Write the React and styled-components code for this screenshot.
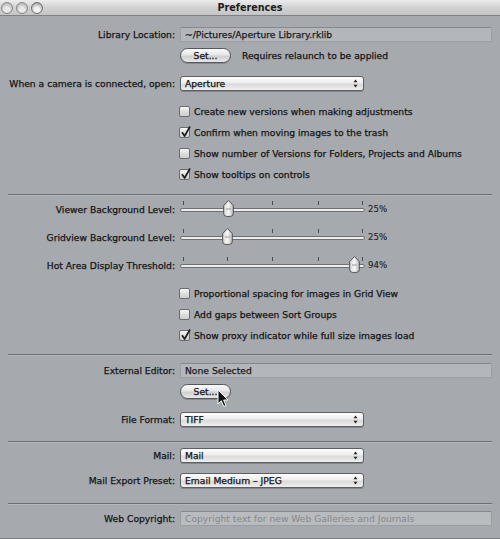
import React from "react";
import styled, { createGlobalStyle } from "styled-components";

const Global = createGlobalStyle`
  html, body { margin: 0; padding: 0; background: #a6a9ad; }
  #root { width: 500px; height: 539px; }
`;

const Window = styled.div`
  position: relative;
  width: 500px;
  height: 538px;
  border-bottom: 1px solid #7b7e82;
  background: #a6a9ad;
  overflow: hidden;
  font-family: "DejaVu Sans", "Liberation Sans", sans-serif;
  font-size: 9.2px;
  color: #141516;
  -webkit-text-stroke: 0.25px currentColor;
  display: flex;
  flex-direction: column;
`;

const TitleBar = styled.div`
  height: 15px;
  flex: none;
  display: grid;
  grid-template-columns: 1fr auto 1fr;
  align-items: center;
  background: linear-gradient(#ececec, #d2d2d2 50%, #c4c4c4);
  border-bottom: 1px solid #7f8184;
`;

const Lights = styled.div`
  display: flex;
  gap: 3px;
  padding-left: 1px;
`;

const Light = styled.div`
  width: 12px;
  height: 12px;
  border-radius: 50%;
  box-sizing: border-box;
  border: 1px solid #6f6f6f;
  background: radial-gradient(circle at 50% 70%, #f2f2f2 0 30%, #b8b8b8 70%, #8c8c8c);
  opacity: ${(p) => (p.$dim ? 0.75 : 1)};
`;

const Title = styled.div`
  font-weight: bold;
  font-size: 9.6px;
  color: #1c1c1c;
  -webkit-text-stroke: 0;
`;

const Content = styled.div`
  display: flex;
  flex-direction: column;
`;

const Row = styled.div`
  display: grid;
  grid-template-columns: 175px 1fr;
  column-gap: 5px;
  align-items: center;
  height: ${(p) => p.$h}px;
  margin-top: ${(p) => p.$mt}px;
`;

const Label = styled.div`
  text-align: right;
  white-space: nowrap;
`;

const Cell = styled.div`
  display: flex;
  align-items: center;
  height: 100%;
`;

const Field = styled.div`
  box-sizing: border-box;
  width: 312px;
  height: 15px;
  padding-left: 4px;
  display: flex;
  align-items: center;
  background: ${(p) => (p.$placeholder ? "#b9bcbf" : "#b3b6ba")};
  border: 1px solid #9a9da1;
  border-top-color: #85888c;
  border-radius: 2px;
  color: ${(p) => (p.$placeholder ? "#85888c" : "#1a1b1c")};
  -webkit-text-stroke: ${(p) => (p.$placeholder ? "0" : "0.25px currentColor")};
  white-space: nowrap;
`;

const PushButton = styled.div`
  box-sizing: border-box;
  width: 51px;
  height: 15px;
  border-radius: 8px;
  border: 1px solid #56585b;
  background: linear-gradient(#fbfbfb, #e6e6e6 45%, #cfcfcf 55%, #e8e8e8);
  box-shadow: 0 1px 0 rgba(0, 0, 0, 0.18);
  display: flex;
  align-items: center;
  justify-content: center;
  color: #111;
`;

const Note = styled.span`
  margin-left: 11px;
`;

const Popup = styled.div`
  box-sizing: border-box;
  width: 184px;
  height: 15px;
  border-radius: 3px;
  border: 1px solid #5d6063;
  background: linear-gradient(#fdfdfd, #eeeeee 45%, #dadada 55%, #efefef);
  box-shadow: 0 1px 0 rgba(0, 0, 0, 0.2);
  display: flex;
  align-items: center;
  justify-content: space-between;
  padding: 0 5px 0 4px;
  color: #111;
  white-space: nowrap;
`;

const Separator = styled.div`
  height: 1px;
  margin: ${(p) => p.$mt}px 8px 0 8px;
  background: #6b6e72;
  box-shadow: 0 1px 0 rgba(255, 255, 255, 0.18);
`;

const CheckRow = styled.div`
  display: flex;
  align-items: center;
  gap: 4px;
  height: 21px;
  padding-left: 179px;
  margin-top: ${(p) => p.$mt || 0}px;
  white-space: nowrap;
`;

const Box = styled.div`
  position: relative;
  box-sizing: border-box;
  width: 11px;
  height: 11px;
  border: 1px solid #6a6c6f;
  border-radius: 2px;
  background: linear-gradient(#f7f7f7, #dcdcdc 55%, #cfcfcf);
  flex: none;
`;

const CheckMark = styled.svg`
  position: absolute;
  left: 0px;
  top: -3px;
`;

const SliderWrap = styled.div`
  position: relative;
  width: 185px;
  height: 20px;
  flex: none;
`;

const Track = styled.div`
  position: absolute;
  left: 0;
  right: 0;
  top: 9px;
  height: 2px;
  background: #ececec;
  border: 1px solid #6e7074;
  border-radius: 2px;
`;

const Tick = styled.div`
  position: absolute;
  top: 2px;
  width: 1px;
  height: 4px;
  background: #4a4c4f;
`;

const Thumb = styled.svg`
  position: absolute;
  top: 1px;
`;

const Percent = styled.span`
  margin-left: 3px;
  font-size: 8.6px;
  color: #222;
  -webkit-text-stroke: 0.1px currentColor;
`;

const Cursor = styled.svg`
  position: absolute;
  left: 217px;
  top: 389px;
`;

function Arrows() {
  return (
    <svg width="5" height="9" viewBox="0 0 5 9">
      <path d="M2.5 0.5 L4.5 3.2 H0.5 Z" fill="#222" />
      <path d="M2.5 8.5 L4.5 5.8 H0.5 Z" fill="#222" />
    </svg>
  );
}

function Check({ checked, children, mt }) {
  return (
    <CheckRow $mt={mt}>
      <Box>
        {checked && (
          <CheckMark width="12" height="13" viewBox="0 0 12 13">
            <path d="M2 7.2 L4.6 11 L10 1.5" fill="none" stroke="#1d1e20" strokeWidth="1.7" strokeLinejoin="round" />
          </CheckMark>
        )}
      </Box>
      <span>{children}</span>
    </CheckRow>
  );
}

const TICKS = [3, 47, 92, 138, 182];

function Slider({ thumb, value }) {
  return (
    <Cell>
      <SliderWrap>
        {TICKS.map((t) => (
          <Tick key={t} style={{ left: t }} />
        ))}
        <Track />
        <Thumb width="11" height="17" viewBox="0 0 11 17" style={{ left: thumb - 5.5 }}>
          <defs>
            <linearGradient id={"tg" + thumb} x1="0" x2="1" y1="0" y2="0">
              <stop offset="0" stopColor="#d6d6d6" />
              <stop offset="0.5" stopColor="#f6f6f6" />
              <stop offset="1" stopColor="#b9b9b9" />
            </linearGradient>
          </defs>
          <path
            d="M5.5 0.6 L10.3 5.5 V13.5 Q10.3 16.4 7.4 16.4 H3.6 Q0.7 16.4 0.7 13.5 V5.5 Z"
            fill={"url(#tg" + thumb + ")"}
            stroke="#4f5154"
            strokeWidth="1"
          />
          <path d="M3 9 H8" stroke="#9a9a9a" strokeWidth="1" />
        </Thumb>
      </SliderWrap>
      <Percent>{value}</Percent>
    </Cell>
  );
}

export default function App() {
  return (
    <>
      <Global />
      <Window>
        <TitleBar>
          <Lights>
            <Light $dim />
            <Light $dim />
            <Light />
          </Lights>
          <Title>Preferences</Title>
          <div />
        </TitleBar>
        <Content>
          <Row $h={15} $mt={11}>
            <Label>Library Location:</Label>
            <Cell>
              <Field>~/Pictures/Aperture Library.rklib</Field>
            </Cell>
          </Row>
          <Row $h={15} $mt={6}>
            <div />
            <Cell>
              <PushButton>Set...</PushButton>
              <Note>Requires relaunch to be applied</Note>
            </Cell>
          </Row>
          <Row $h={15} $mt={13}>
            <Label>When a camera is connected, open:</Label>
            <Cell>
              <Popup>
                <span>Aperture</span>
                <Arrows />
              </Popup>
            </Cell>
          </Row>
          <Check mt={10}>Create new versions when making adjustments</Check>
          <Check checked>Confirm when moving images to the trash</Check>
          <Check>Show number of Versions for Folders, Projects and Albums</Check>
          <Check checked>Show tooltips on controls</Check>
          <Separator $mt={9} />

          <Row $h={20} $mt={4}>
            <Label>Viewer Background Level:</Label>
            <Slider thumb={48} value="25%" />
          </Row>
          <Row $h={20} $mt={8}>
            <Label>Gridview Background Level:</Label>
            <Slider thumb={47} value="25%" />
          </Row>
          <Row $h={20} $mt={8}>
            <Label>Hot Area Display Threshold:</Label>
            <Slider thumb={174} value="94%" />
          </Row>
          <Check mt={8}>Proportional spacing for images in Grid View</Check>
          <Check>Add gaps between Sort Groups</Check>
          <Check checked>Show proxy indicator while full size images load</Check>
          <Separator $mt={8} />

          <Row $h={15} $mt={8}>
            <Label>External Editor:</Label>
            <Cell>
              <Field>None Selected</Field>
            </Cell>
          </Row>
          <Row $h={15} $mt={6}>
            <div />
            <Cell>
              <PushButton>Set...</PushButton>
            </Cell>
          </Row>
          <Row $h={15} $mt={13}>
            <Label>File Format:</Label>
            <Cell>
              <Popup>
                <span>TIFF</span>
                <Arrows />
              </Popup>
            </Cell>
          </Row>
          <Separator $mt={14} />

          <Row $h={15} $mt={6}>
            <Label>Mail:</Label>
            <Cell>
              <Popup>
                <span>Mail</span>
                <Arrows />
              </Popup>
            </Cell>
          </Row>
          <Row $h={15} $mt={10}>
            <Label>Mail Export Preset:</Label>
            <Cell>
              <Popup>
                <span>Email Medium – JPEG</span>
                <Arrows />
              </Popup>
            </Cell>
          </Row>
          <Separator $mt={15} />

          <Row $h={15} $mt={7}>
            <Label>Web Copyright:</Label>
            <Cell>
              <Field $placeholder>Copyright text for new Web Galleries and Journals</Field>
            </Cell>
          </Row>
        </Content>
        <Cursor width="13" height="19" viewBox="0 0 13 19">
          <path d="M1 1 V15 L4.3 11.8 L6.8 17.5 L9 16.5 L6.6 11 H11 Z" fill="#111" stroke="#fff" strokeWidth="1" strokeLinejoin="round" />
        </Cursor>
      </Window>
    </>
  );
}
